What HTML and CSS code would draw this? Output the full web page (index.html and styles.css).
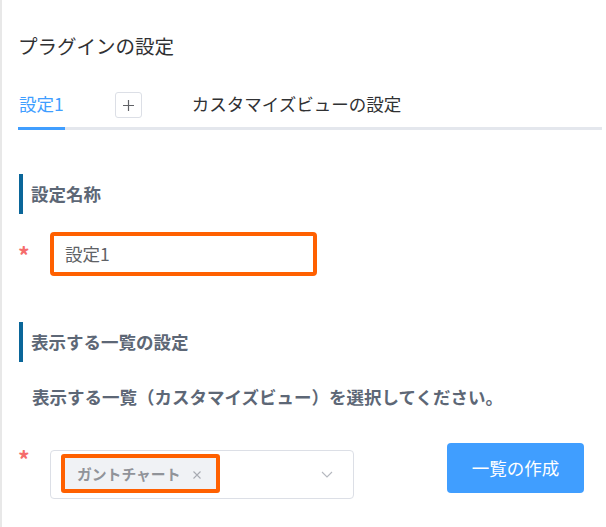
FILE: index.html
```html
<!DOCTYPE html>
<html lang="ja">
<head>
<meta charset="utf-8">
<title>プラグインの設定</title>
<link rel="stylesheet" href="styles.css">
</head>
<body>
<div class="page">
  <h1 class="title">プラグインの設定</h1>

  <div class="tabs">
    <div class="tab active">設定1</div>
    <button class="tab-add" type="button">
      <svg width="13" height="13" viewBox="0 0 13 13"><path d="M6.5 1v11M1 6.5h11" stroke="#606266" stroke-width="1.2" fill="none"/></svg>
    </button>
    <div class="tab">カスタマイズビューの設定</div>
  </div>

  <h2 class="section-head first">設定名称</h2>
  <div class="row row-name">
    <span class="req req-name">*</span>
    <div class="text-input">設定1</div>
  </div>

  <h2 class="section-head second">表示する一覧の設定</h2>
  <p class="desc">表示する一覧（カスタマイズビュー）を選択してください。</p>
  <div class="row row-view">
    <span class="req req-view">*</span>
    <div class="select">
      <div class="tag">
        <span class="tag-label">ガントチャート</span>
        <svg class="tag-close" width="10" height="10" viewBox="0 0 10 10"><path d="M1.5 1.5l7 7M8.5 1.5l-7 7" stroke="#a8abb2" stroke-width="1.1" fill="none"/></svg>
      </div>
      <svg class="chevron" width="12" height="7" viewBox="0 0 12 7"><path d="M1 1l5 5 5-5" stroke="#b5b8bf" stroke-width="1.1" fill="none"/></svg>
    </div>
    <button class="primary" type="button">一覧の作成</button>
  </div>
</div>
</body>
</html>
```

FILE: styles.css
```css
html, body {
  margin: 0;
  padding: 0;
  background: #ffffff;
}

body {
  font-family: "Noto Sans CJK JP", "Noto Sans", sans-serif;
  color: #303133;
}

.page {
  border-left: 2px solid #e8e8e8;
  min-height: 527px;
  box-sizing: border-box;
  padding: 32px 4px 0 16px;
}

.title {
  margin: 0 0 27px;
  font-size: 19.5px;
  font-weight: 400;
  line-height: 28px;
  color: #303133;
}

.tabs {
  display: flex;
  align-items: flex-start;
  height: 40px;
  border-bottom: 3px solid #e4e7ed;
}

.tab {
  height: 40px;
  box-sizing: border-box;
  padding-top: 5px;
  font-size: 17.5px;
  line-height: 24px;
  color: #303133;
}

.tab.active {
  color: #409eff;
  border-bottom: 3px solid #409eff;
  height: 43px;
  padding-left: 1px;
  padding-right: 1px;
}

.tab-add {
  margin: 5px 50px 0 50px;
  width: 27px;
  height: 26px;
  padding: 0;
  border: 1px solid #dcdfe6;
  border-radius: 3px;
  background: #fff;
  display: flex;
  align-items: center;
  justify-content: center;
}

.section-head {
  margin: 0;
  height: 40px;
  border-left: 4px solid #0a6699;
  padding-left: 8px;
  margin-left: 1px;
  font-size: 17.5px;
  font-weight: 700;
  line-height: 40px;
  color: #5d6776;
}

.section-head.first {
  margin-top: 44px;
}

.section-head.second {
  margin-top: 46px;
}

.row {
  display: flex;
  align-items: flex-start;
}

.row-name {
  margin-top: 18px;
}

.req {
  width: 32px;
  flex: none;
  font-size: 23px;
  font-weight: 700;
  line-height: 24px;
  color: #f56c6c;
  box-sizing: border-box;
}

.req-name {
  margin-top: 11px;
}

.req-view {
  margin-top: 4px;
}

.text-input {
  width: 267px;
  height: 44px;
  box-sizing: border-box;
  border: 4px solid #ff6000;
  border-radius: 4px;
  padding: 6px 0 0 11px;
  font-size: 17.5px;
  line-height: 24px;
  color: #606266;
}

.desc {
  margin: 23px 0 0 14px;
  font-size: 17.5px;
  font-weight: 700;
  line-height: 24px;
  color: #5d6776;
}

.row-view {
  margin-top: 34px;
}

.select {
  margin-top: 7px;
  width: 304px;
  height: 49px;
  box-sizing: border-box;
  border: 1px solid #dcdfe6;
  border-radius: 4px;
  display: flex;
  align-items: flex-start;
  padding: 3px 0 0 10px;
  position: relative;
}

.tag {
  width: 159px;
  height: 39px;
  box-sizing: border-box;
  border: 4px solid #ff6000;
  border-radius: 3px;
  background: #f0f2f5;
  display: flex;
  align-items: center;
  padding-left: 12px;
}

.tag-label {
  font-size: 14.8px;
  font-weight: 700;
  color: #909399;
  line-height: 20px;
}

.tag-close {
  margin-left: 12px;
  margin-top: 2px;
}

.chevron {
  position: absolute;
  right: 20px;
  top: 20px;
}

.primary {
  margin-left: 93px;
  width: 137px;
  height: 50px;
  border: none;
  border-radius: 4px;
  background: #409eff;
  color: #ffffff;
  font-family: "Noto Sans CJK JP", "Noto Sans", sans-serif;
  font-size: 17.5px;
  line-height: 24px;
  padding: 0;
}
```
